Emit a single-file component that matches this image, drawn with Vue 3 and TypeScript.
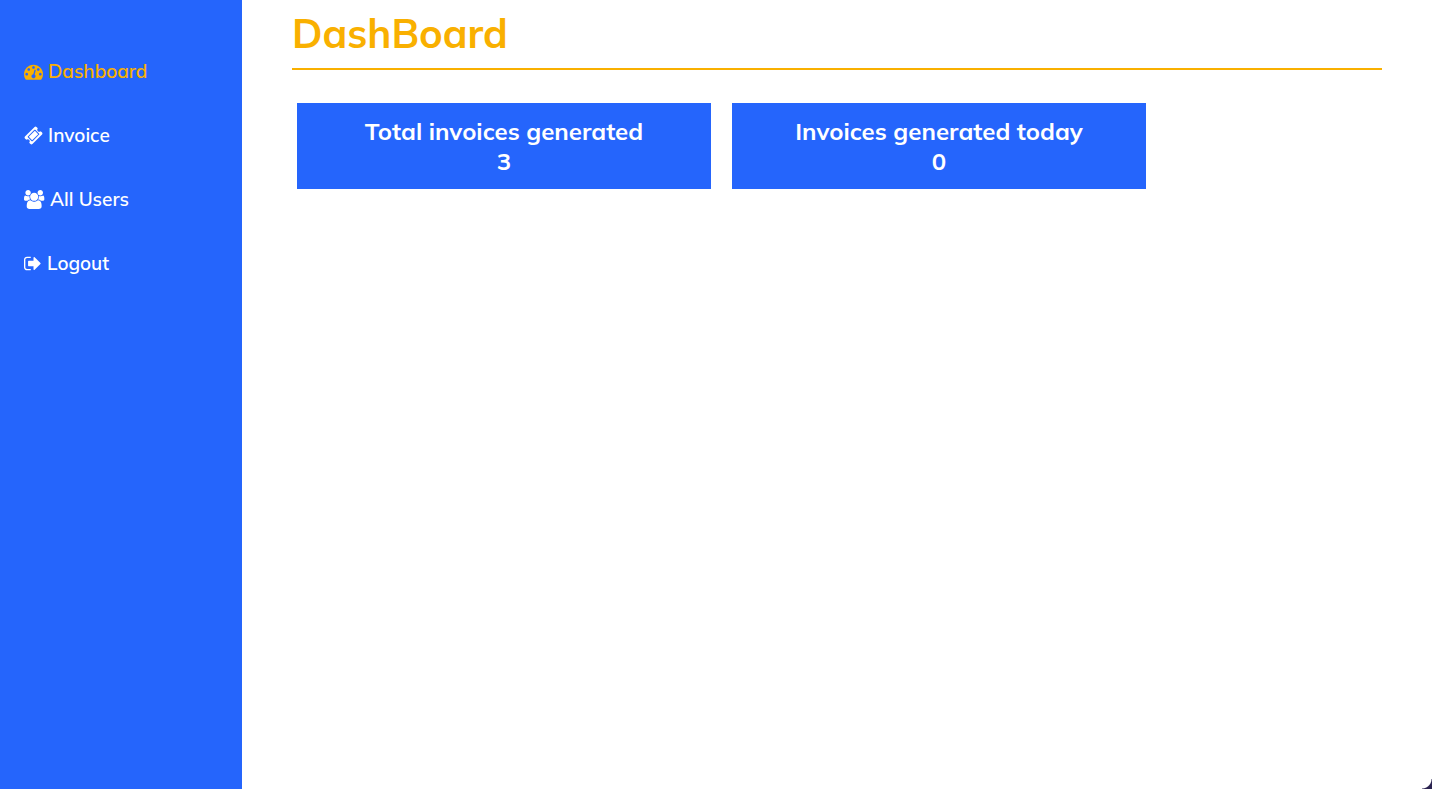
<script setup lang="ts">
interface NavItem {
  label: string
  viewBox: string
  size: string
  path: string
  active?: boolean
}

interface Stat {
  label: string
  value: number
}

const navItems: NavItem[] = [
  {
    label: 'Dashboard',
    viewBox: '0 0 1792 1792',
    size: 'icon-medium',
    active: true,
    path: 'M384 1152q0-53-37.5-90.5t-90.5-37.5-90.5 37.5-37.5 90.5 37.5 90.5 90.5 37.5 90.5-37.5 37.5-90.5zm192-448q0-53-37.5-90.5t-90.5-37.5-90.5 37.5-37.5 90.5 37.5 90.5 90.5 37.5 90.5-37.5 37.5-90.5zm428 481l101-382q6-26-7.5-48.5t-38.5-29.5-48 6.5-30 39.5l-101 382q-60 5-107 43.5t-63 98.5q-20 77 20 146t117 89 146-20 89-117q16-60-6-117t-72-91zm660-33q0-53-37.5-90.5t-90.5-37.5-90.5 37.5-37.5 90.5 37.5 90.5 90.5 37.5 90.5-37.5 37.5-90.5zm-640-640q0-53-37.5-90.5t-90.5-37.5-90.5 37.5-37.5 90.5 37.5 90.5 90.5 37.5 90.5-37.5 37.5-90.5zm448 192q0-53-37.5-90.5t-90.5-37.5-90.5 37.5-37.5 90.5 37.5 90.5 90.5 37.5 90.5-37.5 37.5-90.5zm320 448q0 261-141 483-19 29-54 29h-1402q-35 0-54-29-141-221-141-483 0-182 71-348t191-286 286-191 348-71 348 71 286 191 191 286 71 348z',
  },
  {
    label: 'Invoice',
    viewBox: '0 0 1792 1792',
    size: 'icon-medium',
    path: 'M1024 452l316 316-572 572-316-316zm-211 979l618-618q19-19 19-45t-19-45l-362-362q-18-18-45-18t-45 18l-618 618q-19 19-19 45t19 45l362 362q18 18 45 18t45-18zm889-637l-907 908q-37 37-90.5 37t-90.5-37l-126-126q56-56 56-136t-56-136-136-56-136 56l-125-126q-37-37-37-90.5t37-90.5l907-906q37-37 90.5-37t90.5 37l125 125q-56 56-56 136t56 136 136 56 136-56l126 125q37 37 37 90.5t-37 90.5z',
  },
  {
    label: 'All Users',
    viewBox: '0 0 1920 1792',
    size: 'icon-wide',
    path: 'M593 896q-162 5-265 128h-134q-82 0-138-40.5t-56-118.5q0-353 124-353 6 0 43.5 21t97.5 42.5 119 21.5q67 0 133-23-5 37-5 66 0 139 81 256zm1071 637q0 120-73 189.5t-194 69.5h-874q-121 0-194-69.5t-73-189.5q0-53 3.5-103.5t14-109 26.5-108.5 43-97.5 62-81 85.5-53.5 111.5-20q10 0 43 21.5t73 48 107 48 135 21.5 135-21.5 107-48 73-48 43-21.5q61 0 111.5 20t85.5 53.5 62 81 43 97.5 26.5 108.5 14 109 3.5 103.5zm-1024-1277q0 106-75 181t-181 75-181-75-75-181 75-181 181-75 181 75 75 181zm704 384q0 159-112.5 271.5t-271.5 112.5-271.5-112.5-112.5-271.5 112.5-271.5 271.5-112.5 271.5 112.5 112.5 271.5zm576 225q0 78-56 118.5t-138 40.5h-134q-103-123-265-128 81-117 81-256 0-29-5-66 66 23 133 23 59 0 119-21.5t97.5-42.5 43.5-21q124 0 124 353zm-128-609q0 106-75 181t-181 75-181-75-75-181 75-181 181-75 181 75 75 181z',
  },
  {
    label: 'Logout',
    viewBox: '64 0 1568 1792',
    size: 'icon-narrow',
    path: 'M704 1440q0 4 1 20t.5 26.5-3 23.5-10 19.5-20.5 6.5h-320q-119 0-203.5-84.5t-84.5-203.5v-704q0-119 84.5-203.5t203.5-84.5h320q13 0 22.5 9.5t9.5 22.5q0 4 1 20t.5 26.5-3 23.5-10 19.5-20.5 6.5h-320q-66 0-113 47t-47 113v704q0 66 47 113t113 47h312l11.5 1 11.5 3 8 5.5 7 9 2 13.5zm928-544q0 26-19 45l-544 544q-19 19-45 19t-45-19-19-45v-288h-448q-26 0-45-19t-19-45v-384q0-26 19-45t45-19h448v-288q0-26 19-45t45-19 45 19l544 544q19 19 19 45z',
  },
]

const stats: Stat[] = [
  { label: 'Total invoices generated', value: 3 },
  { label: 'Invoices generated today', value: 0 },
]
</script>

<template>
  <div class="layout">
    <nav class="sidebar" aria-label="Main">
      <a
        v-for="item in navItems"
        :key="item.label"
        href="#"
        class="nav-link"
        :class="{ active: item.active }"
        :aria-current="item.active ? 'page' : undefined"
      >
        <svg
          class="icon"
          :class="item.size"
          :viewBox="item.viewBox"
          preserveAspectRatio="xMinYMid meet"
          aria-hidden="true"
        >
          <path :d="item.path" />
        </svg>
        <span>{{ item.label }}</span>
      </a>
    </nav>
    <main class="content">
      <h1 class="title">DashBoard</h1>
      <div class="stats">
        <section v-for="stat in stats" :key="stat.label" class="card">
          <h2 class="card-text">{{ stat.label }}</h2>
          <p class="card-text">{{ stat.value }}</p>
        </section>
      </div>
    </main>
    <div class="corner"></div>
  </div>
</template>

<style>
body {
  margin: 0;
  background: #fff;
}
</style>

<style scoped>
.layout {
  display: flex;
  min-height: 100vh;
  font-family: Mulish, Muli, Lato, sans-serif;
}

.sidebar {
  display: flex;
  flex: none;
  flex-direction: column;
  box-sizing: border-box;
  width: 242px;
  padding-top: 39px;
  background: #2565fc;
}

.nav-link {
  display: flex;
  align-items: center;
  gap: 5px;
  height: 64px;
  padding: 0 24px;
  color: #fff;
  font-size: 19px;
  font-weight: 600;
  line-height: 24px;
  text-decoration: none;
}

.nav-link.active {
  color: #f9b000;
}

.icon {
  flex: none;
  height: 19px;
  fill: currentColor;
}

.icon-narrow {
  width: 18px;
}

.icon-medium {
  width: 19px;
}

.icon-wide {
  width: 21px;
}

.content {
  flex: 1;
  min-width: 0;
  padding: 0 50px;
}

.title {
  margin: 0;
  padding: 8px 0 10px;
  border-bottom: 2px solid #f9b000;
  color: #f9b000;
  font-size: 40px;
  font-weight: 700;
  line-height: 50px;
}

.stats {
  display: flex;
  gap: 21px;
  padding: 33px 5px;
}

.card {
  box-sizing: border-box;
  width: 40%;
  max-width: 414px;
  padding: 13px;
  background: #2565fc;
  color: #fff;
  text-align: center;
}

.card-text {
  margin: 0;
  font-size: 24px;
  font-weight: 700;
  line-height: 30px;
}

.corner {
  position: fixed;
  right: 0;
  bottom: 0;
  width: 10px;
  height: 10px;
  background: radial-gradient(circle at top left, transparent 9px, #2b2350 10px);
}
</style>
